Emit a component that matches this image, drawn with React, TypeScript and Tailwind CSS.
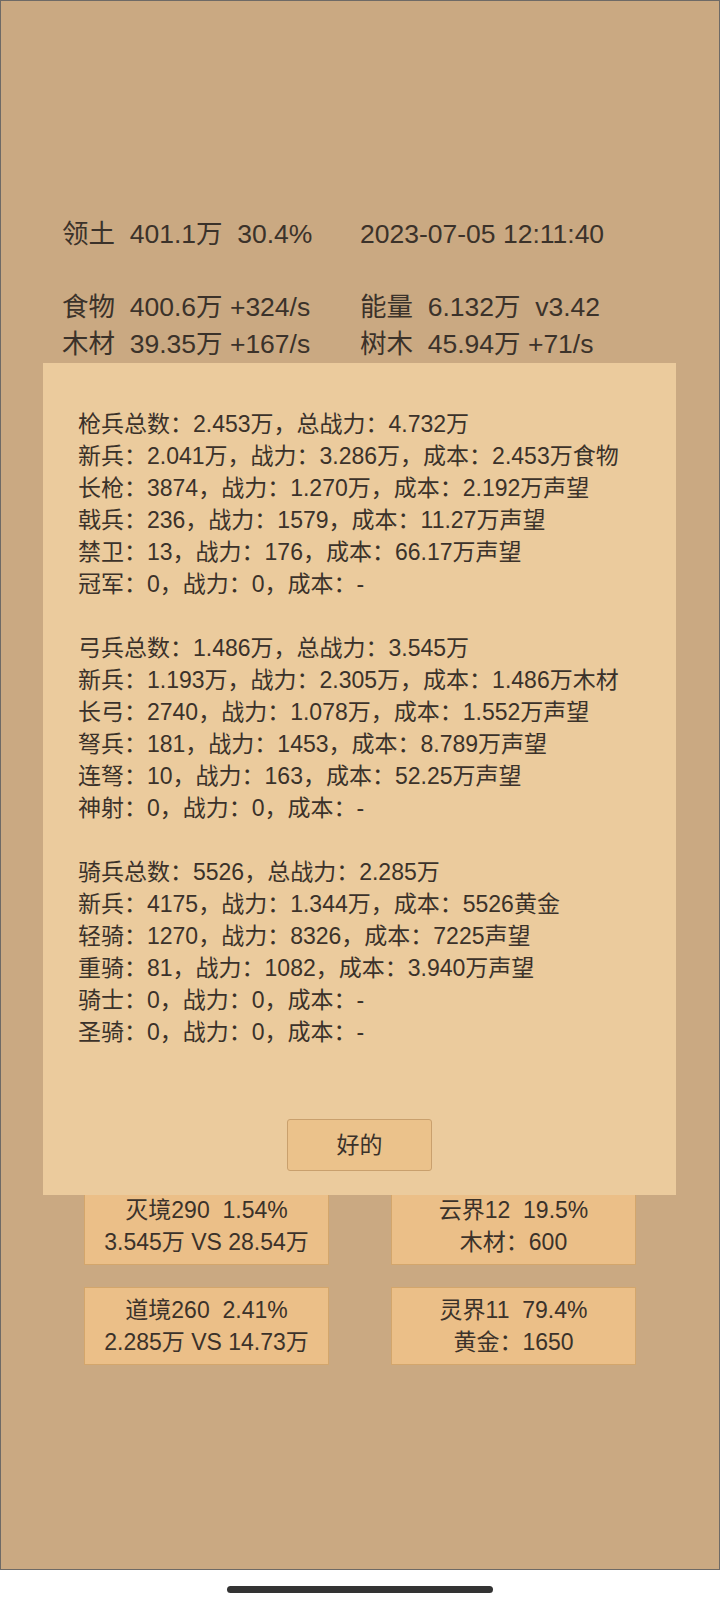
import React from "react";

const FONT = { fontFamily: '"Liberation Sans", "Noto Sans CJK SC", sans-serif' };

const lines: string[] = [
  "枪兵总数：2.453万，总战力：4.732万",
  "新兵：2.041万，战力：3.286万，成本：2.453万食物",
  "长枪：3874，战力：1.270万，成本：2.192万声望",
  "戟兵：236，战力：1579，成本：11.27万声望",
  "禁卫：13，战力：176，成本：66.17万声望",
  "冠军：0，战力：0，成本：-",
  "",
  "弓兵总数：1.486万，总战力：3.545万",
  "新兵：1.193万，战力：2.305万，成本：1.486万木材",
  "长弓：2740，战力：1.078万，成本：1.552万声望",
  "弩兵：181，战力：1453，成本：8.789万声望",
  "连弩：10，战力：163，成本：52.25万声望",
  "神射：0，战力：0，成本：-",
  "",
  "骑兵总数：5526，总战力：2.285万",
  "新兵：4175，战力：1.344万，成本：5526黄金",
  "轻骑：1270，战力：8326，成本：7225声望",
  "重骑：81，战力：1082，成本：3.940万声望",
  "骑士：0，战力：0，成本：-",
  "圣骑：0，战力：0，成本：-",
];

const cards: [string, string][] = [
  ["灭境290  1.54%", "3.545万 VS 28.54万"],
  ["云界12  19.5%", "木材：600"],
  ["道境260  2.41%", "2.285万 VS 14.73万"],
  ["灵界11  79.4%", "黄金：1650"],
];

function Row({ a, b }: { a: string; b: string }) {
  return (
    <div className="flex h-[37px] items-center whitespace-pre text-[26.5px] leading-[37px]">
      <div className="w-[359px] shrink-0 pl-[61px]">{a}</div>
      <div>{b}</div>
    </div>
  );
}

export default function App() {
  return (
    <div className="w-[720px] h-[1600px] bg-white text-[#3b322a]" style={FONT}>
      <div className="relative h-[1570px] w-[720px] border border-[#6e6a66] bg-[#caa982]">
        <div className="pt-[215px]">
          <Row a="领土  401.1万  30.4%" b="2023-07-05 12:11:40" />
          <div className="mt-[36px]">
            <Row a="食物  400.6万 +324/s" b="能量  6.132万  v3.42" />
            <Row a="木材  39.35万 +167/s" b="树木  45.94万 +71/s" />
          </div>
        </div>

        <div className="mt-[824px] grid grid-cols-[245px_245px] gap-x-[62px] gap-y-[22px] pl-[83px]">
          {cards.map(([t1, t2], i) => (
            <div
              key={i}
              className="flex h-[78px] flex-col items-center justify-center whitespace-pre border border-[#d3a66c] bg-[#ebbf88] text-[23px] leading-[32px]"
            >
              <div>{t1}</div>
              <div>{t2}</div>
            </div>
          ))}
        </div>

        <div className="absolute left-[42px] top-[362px] flex h-[832px] w-[633px] flex-col bg-[#ebcb9d] pl-[35px] pt-[45px]">
          <div className="text-[23px] leading-[32px]">
            {lines.map((l, i) => (
              <div key={i} className="h-[32px] whitespace-pre">
                {l}
              </div>
            ))}
          </div>
          <div className="mt-[71px] flex justify-center pr-[35px]">
            <div className="flex h-[52px] w-[145px] items-center justify-center rounded-[3px] border border-[#c9a06d] bg-[#ebc28b] text-[23px]">
              好的
            </div>
          </div>
        </div>
      </div>
      <div className="flex justify-center pt-[16px]">
        <div className="h-[7px] w-[266px] rounded-full bg-[#333333]" />
      </div>
    </div>
  );
}
